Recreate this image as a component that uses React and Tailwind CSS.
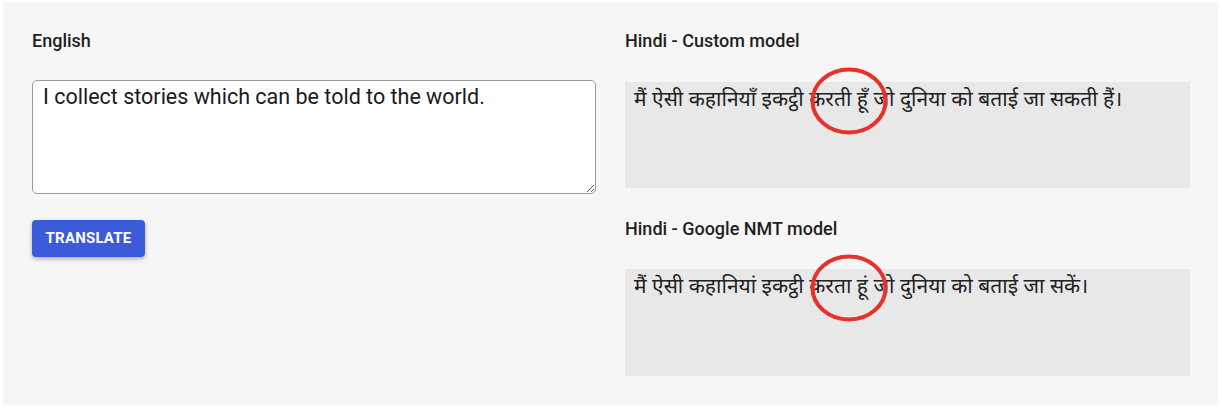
import { useState } from 'react'

const roboto = { fontFamily: 'Roboto, "Liberation Sans", sans-serif' }
const hindi = { fontFamily: '"Noto Sans Devanagari", "Lohit Devanagari", "Noto Sans", Roboto, sans-serif' }

function Label({ children, className = '' }) {
  return (
    <div className={`text-[18px] leading-[20px] font-medium text-[#1f1f1f] ${className}`} style={roboto}>
      {children}
    </div>
  )
}

function Output({ text, className = '' }) {
  return (
    <div className={`relative bg-[#e8e8e8] pl-[9px] pt-[4px] text-[21px] leading-[30px] text-[#222] ${className}`} style={hindi}>
      {text}
      {/* red annotation circle */}
      <svg className="absolute pointer-events-none" style={{ left: 184, top: -16 }} width="80" height="70" viewBox="0 0 80 70">
        <ellipse cx="40" cy="35" rx="36.5" ry="31.5" fill="none" stroke="#e5322b" strokeWidth="4" />
      </svg>
    </div>
  )
}

export default function App() {
  const [source, setSource] = useState('I collect stories which can be told to the world.')

  return (
    <div className="w-[1222px] h-[408px] bg-white pt-[2px] pl-[3px]">
      <div className="w-[1215px] h-[403px] bg-[#f6f6f6] flex pt-[29px]">
        {/* Source */}
        <div className="w-[564px] ml-[29px] flex flex-col items-start">
          <Label>English</Label>
          <textarea
            value={source}
            onChange={e => setSource(e.target.value)}
            className="mt-[29px] w-[564px] h-[114px] bg-white border border-[#9a9a9a] rounded-[5px] pl-[10px] pt-[3px] text-[21.5px] leading-[26px] text-[#1a1a1a] outline-none"
            style={roboto}
          />
          <button
            className="mt-[26px] w-[113px] h-[37px] rounded-[4px] bg-[#3b5bdb] text-white text-[15px] font-bold tracking-[0.2px] shadow-[0_2px_4px_rgba(0,0,0,0.3)]"
            style={roboto}
          >
            TRANSLATE
          </button>
        </div>

        {/* Targets */}
        <div className="w-[565px] ml-[29px]">
          <Label>Hindi - Custom model</Label>
          <Output className="mt-[31px] h-[106px]" text="मैं ऐसी कहानियाँ इकट्ठी करती हूँ जो दुनिया को बताई जा सकती हैं।" />
          <Label className="mt-[31px]">Hindi - Google NMT model</Label>
          <Output className="mt-[30px] h-[107px]" text="मैं ऐसी कहानियां इकट्ठी करता हूं जो दुनिया को बताई जा सकें।" />
        </div>
      </div>
    </div>
  )
}
